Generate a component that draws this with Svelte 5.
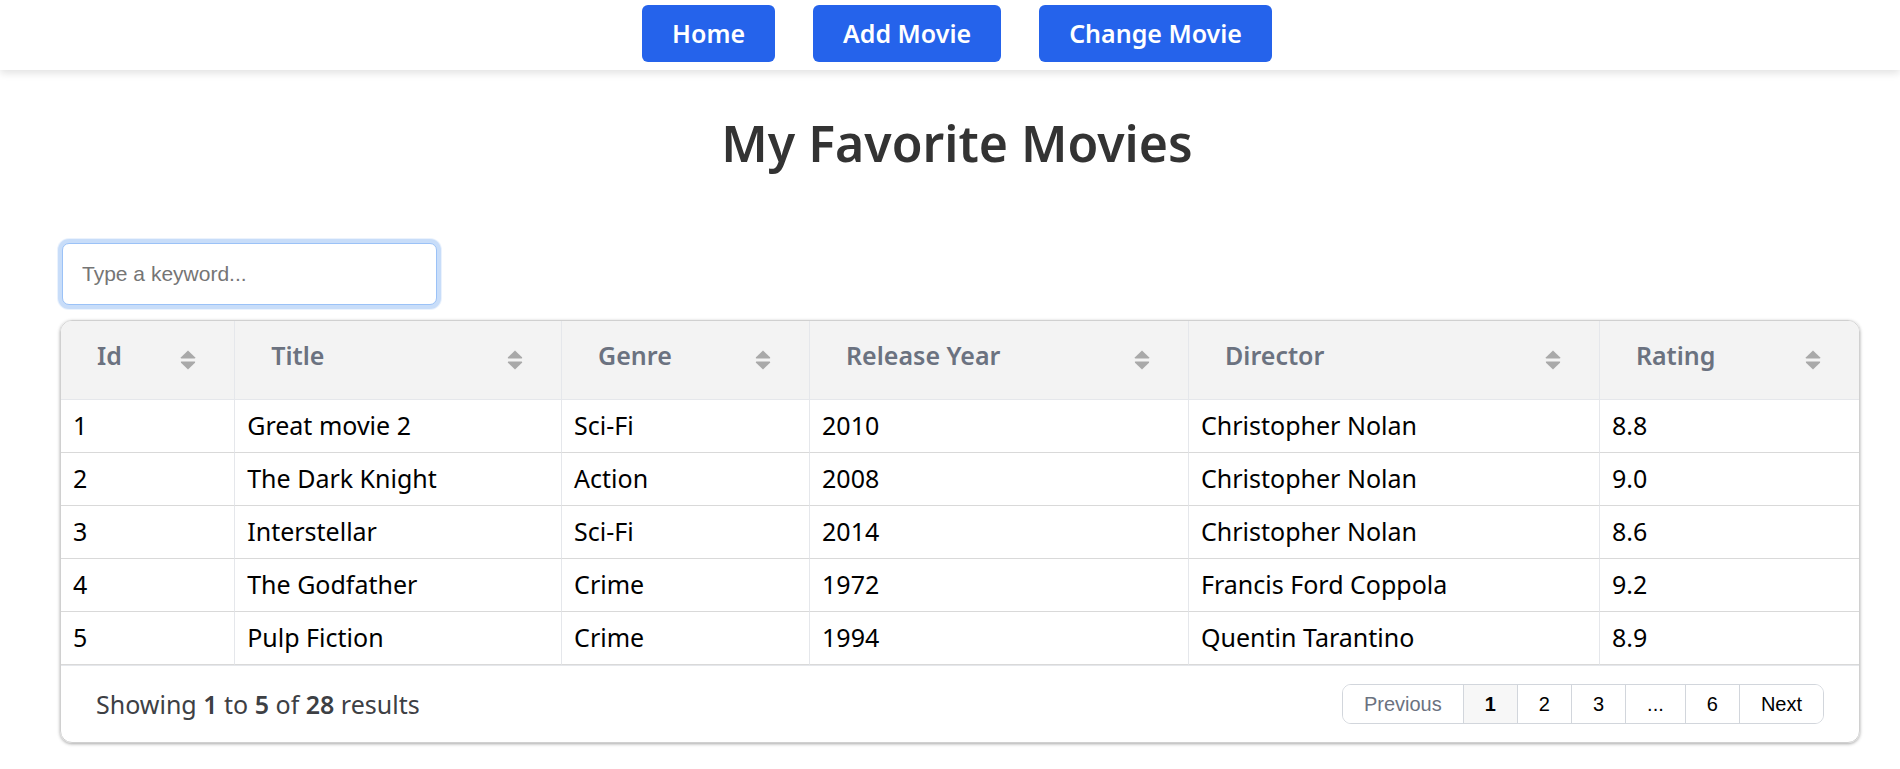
<script>
  const navItems = ['Home', 'Add Movie', 'Change Movie'];
  const columns = [
    { name: 'Id', width: 9.69 },
    { name: 'Title', width: 18.18 },
    { name: 'Genre', width: 13.79 },
    { name: 'Release Year', width: 21.08 },
    { name: 'Director', width: 22.85 },
    { name: 'Rating', width: 14.41 }
  ];
  const movies = [
    ['1', 'Great movie 2', 'Sci-Fi', '2010', 'Christopher Nolan', '8.8'],
    ['2', 'The Dark Knight', 'Action', '2008', 'Christopher Nolan', '9.0'],
    ['3', 'Interstellar', 'Sci-Fi', '2014', 'Christopher Nolan', '8.6'],
    ['4', 'The Godfather', 'Crime', '1972', 'Francis Ford Coppola', '9.2'],
    ['5', 'Pulp Fiction', 'Crime', '1994', 'Quentin Tarantino', '8.9']
  ];
  const pages = ['Previous', '1', '2', '3', '...', '6', 'Next'];
  let keyword = $state('');
</script>

<header class="navbar">
  <nav>
    {#each navItems as item}
      <a href="#{item.toLowerCase().replace(' ', '-')}">{item}</a>
    {/each}
  </nav>
</header>

<main>
  <h1>My Favorite Movies</h1>

  <input class="search" type="search" aria-label="Search movies" placeholder="Type a keyword..." bind:value={keyword} />

  <section class="grid">
    <table>
      <colgroup>
        {#each columns as column}
          <col style="width: {column.width}%" />
        {/each}
      </colgroup>
      <thead>
        <tr>
          {#each columns as column}
            <th scope="col">
              <div class="head">
                <span>{column.name}</span>
                <button class="sort" aria-label="Sort by {column.name}">
                  <svg viewBox="0 0 16 20" width="16" height="20" aria-hidden="true">
                    <path d="M8 .5 15 7.3Q15.6 8.5 14.6 8.5H1.4Q.4 8.5 1 7.3Z" />
                    <path d="M8 19.5 15 12.7Q15.6 11.5 14.6 11.5H1.4Q.4 11.5 1 12.7Z" />
                  </svg>
                </button>
              </div>
            </th>
          {/each}
        </tr>
      </thead>
      <tbody>
        {#each movies as movie}
          <tr>
            {#each movie as value}
              <td>{value}</td>
            {/each}
          </tr>
        {/each}
      </tbody>
    </table>

    <footer>
      <p>Showing <b>1</b> to <b>5</b> of <b>28</b> results</p>
      <div class="pages">
        {#each pages as page}
          <button class:current={page === '1'} disabled={page === 'Previous'}>{page}</button>
        {/each}
      </div>
    </footer>
  </section>
</main>

<style>
  :global(body) {
    margin: 0;
    background: #fff;
    color: #000;
    font-family: "Lucida Sans", "Noto Sans", sans-serif;
    font-size: 25px;
  }

  .navbar {
    padding: 5px 0 8px;
    background: #fff;
    box-shadow: 0 3px 8px rgba(0, 0, 0, 0.12);
  }

  nav {
    display: flex;
    justify-content: center;
    gap: 38px;
    padding-left: 14px;
  }

  nav a {
    padding: 0 30px;
    border-radius: 6px;
    background: #2563eb;
    color: #fff;
    font-weight: 600;
    line-height: 57px;
    text-decoration: none;
  }

  main {
    padding: 40px 40px 24px 60px;
  }

  h1 {
    margin: 0 0 67px;
    padding-right: 6px;
    color: #333;
    font-size: 50px;
    font-weight: 600;
    line-height: 66px;
    text-align: center;
  }

  .search {
    display: block;
    box-sizing: border-box;
    width: 375px;
    height: 62px;
    margin: 0 2px 15px;
    padding: 0 19px;
    border: 1px solid #9bc2f7;
    border-radius: 7px;
    outline: none;
    box-shadow: 0 0 0 4px rgba(149, 189, 243, 0.4), 0 0 0 5px rgba(149, 189, 243, 0.2);
    appearance: none;
    background: #fff;
    font-family: Arial, "Liberation Sans", sans-serif;
    font-size: 21px;
  }

  .search::placeholder {
    color: #757575;
  }

  .grid {
    overflow: hidden;
    border: 1px solid #d0d0d0;
    border-radius: 12px;
    box-shadow: 0 1px 4px rgba(0, 0, 0, 0.1), 0 1px 3px rgba(0, 0, 0, 0.26);
  }

  table {
    width: 100%;
    border-spacing: 0;
    table-layout: fixed;
  }

  th,
  td {
    box-sizing: border-box;
    border-right: 1px solid #e5e7eb;
    text-align: left;
  }

  th:last-child,
  td:last-child {
    border-right: 0;
  }

  th {
    height: 79px;
    padding: 0 38px 0 36px;
    border-bottom: 1px solid #e5e7eb;
    background: #f3f3f3;
    color: #6b7280;
    font-weight: 600;
    white-space: nowrap;
  }

  .head {
    display: flex;
    align-items: center;
    justify-content: space-between;
    padding-bottom: 11px;
    line-height: 34px;
  }

  .sort {
    display: flex;
    padding: 10px 0 0;
    border: 0;
    background: none;
  }

  .sort svg {
    fill: #a9a9a9;
  }

  td {
    height: 53px;
    padding: 0 12px 3px;
    border-bottom: 1px solid #d9d9d9;
    line-height: 34px;
  }

  footer {
    display: flex;
    align-items: center;
    justify-content: space-between;
    padding: 18px 35px;
    border-top: 1px solid #e5e7eb;
    color: #3d4044;
  }

  footer p {
    margin: 0;
    line-height: 34px;
  }

  footer b {
    font-weight: 600;
  }

  .pages {
    display: flex;
    overflow: hidden;
    border: 1px solid #d2d6dc;
    border-radius: 9px;
  }

  .pages button {
    padding: 0 21px;
    border: 0;
    border-right: 1px solid #d2d6dc;
    background: #fff;
    color: #000;
    font-family: Arial, "Liberation Sans", sans-serif;
    font-size: 20px;
    line-height: 38px;
  }

  .pages button:last-child {
    border-right: 0;
  }

  .pages button:disabled {
    color: #6b7280;
  }

  .pages .current {
    background: #f7f7f7;
    font-weight: 700;
  }
</style>
